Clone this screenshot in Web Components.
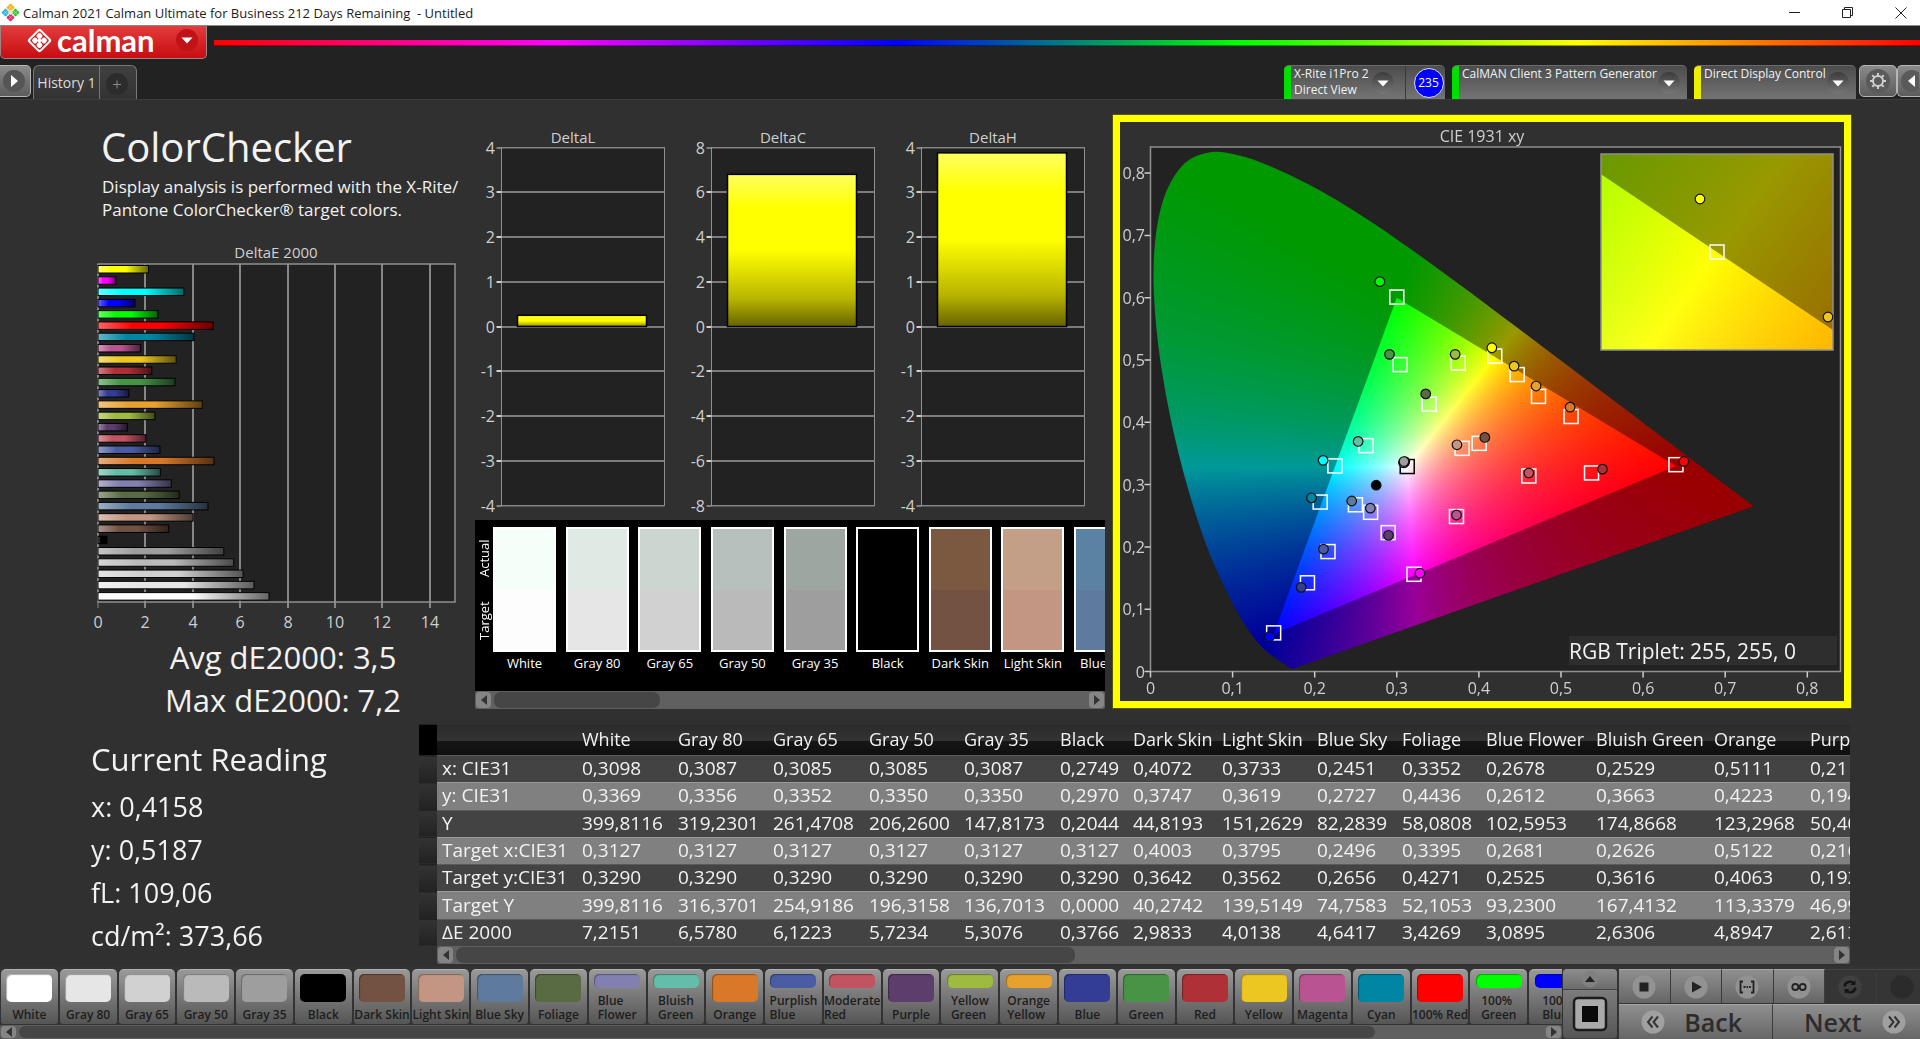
<!DOCTYPE html>
<html lang="en">
<head>
<meta charset="utf-8">
<title>Calman 2021 Calman Ultimate for Business 212 Days Remaining - Untitled</title>
<style>
html, body { margin: 0; height: 100%; background: #222; }
body { font-family: "Open Sans", "Noto Sans", sans-serif; color: #f2f2f2; overflow: hidden; }
</style>
</head>
<body>
<calman-app></calman-app>
<script>
const PATCHES = [
  // name, colour, target xy, actual xy, delta E
  { n: 'White', c: '#ffffff', t: [.3127, .3290], a: [.3098, .3369], e: 7.2151 },
  { n: 'Gray 80', c: '#e6e6e6', t: [.3127, .3290], a: [.3087, .3356], e: 6.5780 },
  { n: 'Gray 65', c: '#d1d1d1', t: [.3127, .3290], a: [.3085, .3352], e: 6.1223 },
  { n: 'Gray 50', c: '#bababa', t: [.3127, .3290], a: [.3085, .3350], e: 5.7234 },
  { n: 'Gray 35', c: '#9e9e9e', t: [.3127, .3290], a: [.3087, .3370], e: 5.3076 },
  { n: 'Black', c: '#000000', t: [.3127, .3290], a: [.2749, .2990], e: .3766 },
  { n: 'Dark Skin', c: '#735244', t: [.4003, .3662], a: [.4072, .3757], e: 2.9833 },
  { n: 'Light Skin', c: '#c29682', t: [.3795, .3582], a: [.3733, .3639], e: 4.0138 },
  { n: 'Blue Sky', c: '#5e7a9c', t: [.2496, .2676], a: [.2451, .2737], e: 4.6417 },
  { n: 'Foliage', c: '#596b42', t: [.3395, .4291], a: [.3352, .4456], e: 3.4269 },
  { n: 'Blue Flower', c: '#8280b0', t: [.2681, .2555], a: [.2678, .2622], e: 3.0895 },
  { n: 'Bluish Green', c: '#63bda8', t: [.2626, .3626], a: [.2529, .3693], e: 2.6306 },
  { n: 'Orange', c: '#d97829', t: [.5122, .4093], a: [.5111, .4243], e: 4.8947 },
  { n: 'Purplish Blue', c: '#4a5ca3', t: [.2162, .1925], a: [.2107, .1964], e: 2.6130 },
  { n: 'Moderate Red', c: '#c25461', t: [.4608, .3138], a: [.4608, .3187], e: 2.02 },
  { n: 'Purple', c: '#5c3d6b', t: [.2895, .2229], a: [.2899, .2186], e: 1.24 },
  { n: 'Yellow Green', c: '#9ebb40', t: [.3748, .4950], a: [.3711, .5091], e: 2.4 },
  { n: 'Orange Yellow', c: '#e6a12e', t: [.4726, .4416], a: [.4697, .4582], e: 4.4 },
  { n: 'Blue', c: '#333d96', t: [.1912, .1424], a: [.1835, .1351], e: 1.3 },
  { n: 'Green', c: '#479447', t: [.3041, .4926], a: [.2911, .5091], e: 3.25 },
  { n: 'Red', c: '#b03038', t: [.5372, .3187], a: [.5505, .3248], e: 2.27 },
  { n: 'Yellow', c: '#edc721', t: [.4466, .4766], a: [.4429, .4901], e: 3.3 },
  { n: 'Magenta', c: '#ba5491', t: [.3727, .2487], a: [.3727, .2512], e: 1.8 },
  { n: 'Cyan', c: '#0085a3', t: [.2067, .2720], a: [.1961, .2788], e: 4.05 },
  { n: '100% Red', c: '#ff0000', t: [.6400, .3320], a: [.6496, .3371], e: 4.86 },
  { n: '100% Green', c: '#00ff00', t: [.3000, .6010], a: [.2793, .6258], e: 2.53 },
  { n: '100% Blue', c: '#0000ff', t: [.1500, .0620], a: [.1449, .0559], e: 1.56 },
  { n: '100% Cyan', c: '#00ffff', t: [.2246, .3300], a: [.2103, .3389], e: 3.62 },
  { n: '100% Magenta', c: '#ff00ff', t: [.3209, .1560], a: [.3281, .1577], e: .75 },
  { n: '100% Yellow', c: '#ffff00', t: [.4193, .5063], a: [.4158, .5197], e: 2.13 }
];

function component(name, html, connected) {
  const tpl = document.createElement('template');
  tpl.innerHTML = '<style>*{box-sizing:border-box}button{font:inherit;color:inherit;margin:0;padding:0;border:0;background:none}svg{display:block}</style>' + html;
  customElements.define(name, class extends HTMLElement {
    connectedCallback() {
      if (this.shadowRoot) return;
      const root = this.attachShadow({ mode: 'open' });
      root.append(tpl.content.cloneNode(true));
      if (connected) connected(root, this);
    }
  });
}

component('title-bar', `
<style>
:host { display: flex; align-items: center; height: 26px; background: #fff; border-bottom: 1px solid #8a8a8a; color: #1c1c1c; font-size: 13px; padding-left: 1px; overflow: hidden; }
.name { flex: 1; white-space: pre; padding-left: 3px; }
.win { display: flex; margin-right: -7px; }
button { width: 53px; height: 25px; display: grid; place-items: center; }
</style>
<svg width="19" height="19" viewBox="-9.5 -9.5 19 19" aria-hidden="true">
  <g transform="rotate(45)">
    <rect x="-6.5" y="-6.5" width="6" height="6" rx="1" fill="#f7b512"/>
    <rect x=".5" y="-6.5" width="6" height="6" rx="1" fill="#35c52c"/>
    <rect x=".5" y=".5" width="6" height="6" rx="1" fill="#e6245f"/>
    <rect x="-6.5" y=".5" width="6" height="6" rx="1" fill="#2bb4e4"/>
    <rect x="-2" y="-2" width="4" height="4" fill="#e9e6c0"/>
    <path d="M-3.500-6.500v13M3.500-6.500v13M-6.500-3.500h13M-6.500 3.500h13" stroke="#fff" stroke-width=".7" opacity=".6"/>
  </g>
</svg>
<span class="name">Calman 2021 Calman Ultimate for Business 212 Days Remaining  - Untitled</span>
<div class="win">
<button aria-label="Minimize"><svg width="12" height="12"><path d="M0 5.500h11" stroke="#222"/></svg></button>
<button aria-label="Restore"><svg width="12" height="12" fill="none" stroke="#222"><path d="M.5 2.500h8v8h-8zM2.500 2.500v-2h8v8h-2"/></svg></button>
<button aria-label="Close"><svg width="12" height="12"><path d="M.5.5l11 11M11.500.5l-11 11" stroke="#222" fill="none"/></svg></button>
</div>`);

component('device-tab', `
<style>
:host { display: flex; height: 34px; border-radius: 5px 5px 0 0; overflow: hidden; background: linear-gradient(#4c4c4c, #747474); border-top: 1px solid #6c6c6c; font-size: 12px; line-height: 16px; }
.led { width: 7px; background: var(--led); }
.pick { flex: 1; display: flex; align-items: center; justify-content: space-between; text-align: left; padding: 0 var(--pad, 7px) 0 3px; white-space: pre; }
.text { align-self: start; }
</style>
<span class="led"></span>
<button class="pick"><span class="text"><slot></slot></span>
<svg width="22" height="22" viewBox="0 0 22 22"><defs><linearGradient id="g" x2="0" y2="1"><stop offset="0" stop-color="#3c3c3c"/><stop offset="1" stop-color="#777"/></linearGradient></defs><circle cx="11" cy="11" r="11" fill="url(#g)"/><path d="M5.500 8.500h11l-5.500 6z" fill="#fff"/></svg></button>
<slot name="extra"></slot>`);

component('level-badge', `
<style>
:host { display: grid; place-items: center; width: 40px; padding-left: 6px; border-left: 1px solid #3a3a3a; box-sizing: border-box; }
button { width: 30px; height: 30px; border-radius: 50%; background: #00f; border: 1px solid #dcdcff; font-size: 12px; color: #fff; }
</style><button><slot></slot></button>`);

component('app-header', `
<style>
:host { display: block; height: 73px; background: #222; }
.top { display: flex; height: 39px; align-items: start; gap: 7px; }
.brand { width: 207px; height: 33px; display: flex; align-items: center; padding: 0 8px 4px 25px; background: linear-gradient(#e23c3c, #c80d12); border: 1px solid #9d8484; border-top: 0; border-radius: 0 0 5px 5px; color: #fff; }
.word { flex: 1; text-align: left; padding-left: 4px; font: 700 31px/28px Lato, sans-serif; }
.rainbow { flex: 1; height: 6px; margin-top: 14px; background: linear-gradient(90deg, #f00, #f0f 20%, #00f 40%, #0f0 60%, #ff0 80%, #f00); border-bottom: 1px solid #0006; }
.bar { display: flex; align-items: start; height: 34px; }
.play, .sq { height: 32px; border: 1px solid #b5b5b5; border-radius: 0 5px 5px 0; background: linear-gradient(#8a8a8a, #5c5c5c); display: grid; place-items: center; }
.play { width: 31px; border-left: 0; margin-right: 2px; padding-right: 2px; }
.tabs { display: flex; height: 34px; border: 1px solid #777; border-bottom: 0; border-radius: 6px 6px 0 0; background: linear-gradient(#404040, #333); font-size: 14px; }
.tab { width: 65px; color: #ddd; white-space: nowrap; }
.add { width: 37px; border-left: 1px solid #777; display: grid; place-items: center; padding-right: 3px; }
.space { flex: 1; }
device-tab { margin-right: 7px; }
.d1 { width: 161px; --led: #00e000; --pad: 11px; }
.d2 { width: 235px; --led: #00e000; }
.d3 { width: 162px; --led: #f0ee00; margin-right: 3px; }
.sq { width: 38px; border-radius: 5px; }
.sq.end { width: 23px; border-right: 0; border-radius: 5px 0 0 5px; }
</style>
<div class="top">
  <button class="brand">
    <svg width="27" height="27" viewBox="-13.5 -13.5 27 27" aria-hidden="true"><g transform="rotate(45)" fill="#fff">
      <path fill-rule="evenodd" d="M-6-9H6A3 3 0 0 1 9-6V6A3 3 0 0 1 6 9H-6A3 3 0 0 1-9 6V-6A3 3 0 0 1-6-9zM-5.500-7A1.500 1.500 0 0 0-7-5.500V5.500A1.500 1.500 0 0 0-5.500 7H5.500A1.500 1.500 0 0 0 7 5.500V-5.500A1.500 1.500 0 0 0 5.500-7z"/>
      <rect x="-5.800" y="-5.800" width="5.200" height="5.200" rx="1.800"/><rect x=".6" y="-5.800" width="5.200" height="5.200" rx="1.800"/>
      <rect x="-5.800" y=".6" width="5.200" height="5.200" rx="1.800"/><rect x=".6" y=".6" width="5.200" height="5.200" rx="1.800"/>
      <circle r="2"/></g></svg>
    <span class="word">calman</span>
    <svg width="22" height="22"><circle cx="11" cy="11" r="11" fill="#c01217"/><path d="M5.500 8.500h11l-5.500 6z" fill="#fff"/></svg>
  </button>
  <div class="rainbow"></div>
</div>
<div class="bar">
  <button class="play" aria-label="Open"><svg width="22" height="22"><circle cx="11" cy="11" r="11" fill="#555"/><path d="M8 5l7 6-7 6z" fill="#fff"/></svg></button>
  <div class="tabs"><button class="tab">History 1</button><button class="add" aria-label="Add"><svg width="22" height="24"><circle cx="11" cy="13" r="11" fill="#2c2c2c"/><path d="M11 9.500v8M7 13.500h8" stroke="#8a8a8a"/></svg></button></div>
  <span class="space"></span>
  <device-tab class="d1">X-Rite i1Pro 2<br>Direct View<level-badge slot="extra">235</level-badge></device-tab>
  <device-tab class="d2">CalMAN Client 3 Pattern Generator</device-tab>
  <device-tab class="d3">Direct Display Control</device-tab>
  <button class="sq" aria-label="Settings"><svg width="24" height="24" viewBox="-12 -12 24 24"><circle r="12" fill="#5a5a5a"/><g fill="none" stroke="#d0d0d0" stroke-width="2"><circle r="5"/><path d="M0-8v2.500M0 8V5.500M-8 0h2.500M8 0H5.500M-5.700-5.700l1.800 1.800M5.700 5.700L3.900 3.900M-5.700 5.700l1.800-1.800M5.700-5.700L3.900-3.900"/></g></svg></button>
  <button class="sq end" aria-label="Expand"><svg width="20" height="22"><circle cx="13" cy="11" r="11" fill="#5a5a5a"/><path d="M16 5l-7 6 7 6z" fill="#fff"/></svg></button>
</div>`);

component('scroll-bar', `
<style>
:host { display: flex; height: 18px; background: #606060; padding: 1px; border-radius: 2px; }
button { width: 15px; background: #858585; border-radius: 4px; display: grid; place-items: center; }
.track { flex: 1; margin: 0 3px; }
.thumb { height: 100%; width: var(--thumb, 40%); background: #464646; border-radius: 7px; }
</style>
<button aria-label="Scroll left"><svg width="6" height="10"><path d="M6 0v10L0 5z" fill="#333"/></svg></button>
<div class="track"><div class="thumb"></div></div>
<button aria-label="Scroll right"><svg width="6" height="10"><path d="M0 0v10l6-5z" fill="#333"/></svg></button>`);

component('delta-e-chart', `
<style>:host { display: block; } svg { width: 100%; height: auto; overflow: visible; } text { fill: #cfcfcf; font-size: 16px; text-anchor: middle; } .name { font-size: 15px; }</style>
<svg viewBox="0 0 475 400" role="img" aria-label="DeltaE 2000"></svg>`, root => {
  const L = 98, T = 24, R = 455, B = 362, U = 23.7;
  let s = '<defs><linearGradient id="sh"><stop offset="0" stop-color="#fff" stop-opacity=".4"/><stop offset=".3" stop-color="#fff" stop-opacity="0"/><stop offset=".55" stop-color="#000" stop-opacity="0"/><stop offset="1" stop-color="#000" stop-opacity=".6"/></linearGradient></defs>';
  s += `<text class="name" x="276" y="18">DeltaE 2000</text><rect x="${L}" y="${T}" width="${R - L}" height="${B - T}" fill="#222"/>`;
  for (let v = 0; v <= 14; v += 2) {
    const x = Math.round(L + v * U);
    s += `<path d="M${x} ${T}V${B + 6}" stroke="#868686" stroke-width="${v ? 2 : 1}"/><text x="${x}" y="${B + 26}">${v}</text>`;
  }
  s += `<rect x="${L}" y="${T}" width="${R - L}" height="${B - T}" fill="none" stroke="#909090" stroke-width="1.500"/>`;
  [...PATCHES].reverse().forEach((p, i) => {
    const y = T + 1.500 + i * 11.28, w = p.e * U;
    s += `<rect x="${L}" y="${y}" width="${w}" height="7.500" fill="${p.c}"/><rect x="${L}" y="${y}" width="${w}" height="7.500" fill="url(#sh)" stroke="#000"/>`;
  });
  root.querySelector('svg').innerHTML = s;
});

component('delta-chart', `
<style>:host { display: block; } svg { width: 100%; height: auto; overflow: visible; } text { fill: #cfcfcf; font-size: 16px; } .name { font-size: 15px; }</style>
<svg viewBox="0 0 210 394" role="img"></svg>`, (root, el) => {
  const name = el.getAttribute('name'), max = +el.getAttribute('max'), value = +el.getAttribute('value');
  const L = 26.5, R = 189.5, T = 21.5, B = 379.5, step = (B - T) / 8;
  let s = '<defs><linearGradient id="y" x2="0" y2="1"><stop offset="0" stop-color="#ffff60"/><stop offset=".22" stop-color="#ff0"/><stop offset=".5" stop-color="#ff0"/><stop offset=".82" stop-color="#b8b400"/><stop offset="1" stop-color="#666200"/></linearGradient></defs>';
  s += `<text class="name" x="98" y="17" text-anchor="middle">${name}</text><rect x="${L}" y="${T}" width="${R - L}" height="${B - T}" fill="#222" stroke="#909090"/>`;
  for (let i = 0; i <= 8; i++) {
    const y = Math.round(T + i * step), edge = i % 8 === 0;
    s += `<path d="M${L} ${y}H${R}" stroke="#7c7c7c" stroke-width="${edge ? 1 : 2}"/><path d="M${L} ${y}h-5" stroke="#d0d0d0" stroke-width="${edge ? 1 : 2}"/><text x="20" y="${y + 6}" text-anchor="end">${max - i * max / 4}</text>`;
  }
  const h = value / max * 4 * step;
  s += `<rect x="42.500" y="${T + 4 * step - h}" width="129" height="${h}" fill="url(#y)" stroke="#000" stroke-width="1.500"/>`;
  root.querySelector('svg').innerHTML = s;
});

component('patch-strip', `
<style>
:host { display: block; }
.view { display: flex; height: 171px; background: #000; overflow: hidden; padding-top: 7px; color: #fff; }
.side { flex: none; width: 18px; height: 125px; display: flex; flex-direction: row; align-items: center; justify-content: space-around; writing-mode: vertical-rl; transform: rotate(180deg); font-size: 13px; line-height: 16px; }
.list { flex: none; width: 644px; display: grid; grid-template-columns: repeat(9, 63px); justify-content: space-between; }
.p { text-align: center; font-size: 13px; white-space: nowrap; }
.sw { height: 125px; border: 2px solid #fff; background: linear-gradient(var(--a) 50%, var(--t) 50%); margin-bottom: 2px; }
span { display: block; }
scroll-bar { --thumb: 28%; }
</style>
<div class="view"><div class="side"><span>Target</span><span>Actual</span></div><div class="list"></div></div>
<scroll-bar></scroll-bar>`, root => {
  const actual = ['#f5fff9', '#dfeae4', '#ccd5d0', '#b8c0bd', '#9ea6a1', '#000', '#7b5840', '#c29f86', '#5b82a2'];
  root.querySelector('.list').innerHTML = actual.map((a, i) =>
    `<div class="p"><div class="sw" style="--a:${a};--t:${i ? PATCHES[i].c : '#fdfdfd'}"></div><span>${PATCHES[i].n}</span></div>`).join('');
});

component('cie-chart', `
<style>
:host { display: grid; border: 7px solid #ff0; outline: 1px solid #55550a; background: #303030; }
canvas, svg { grid-area: 1 / 1; width: 100%; height: auto; display: block; }
text { fill: #cfcfcf; font-size: 16px; }
.rgb { fill: #f4f4f4; font-size: 21px; }
</style>
<canvas width="724" height="579"></canvas>
<svg viewBox="0 0 724 579" role="img" aria-label="CIE 1931 xy"></svg>`, root => {
  const LOCUS = [[.1741,.0050],[.1733,.0048],[.1714,.0051],[.1689,.0069],[.1644,.0109],[.1566,.0177],[.1510,.0227],[.1440,.0297],[.1355,.0399],[.1241,.0578],[.1096,.0868],[.0913,.1327],[.0687,.2007],[.0454,.2950],[.0235,.4127],[.0082,.5384],[.0039,.6548],[.0139,.7502],[.0389,.8120],[.0743,.8338],[.1142,.8262],[.1547,.8059],[.1929,.7816],[.2296,.7543],[.2658,.7243],[.3016,.6923],[.3373,.6589],[.3731,.6245],[.4087,.5896],[.4441,.5547],[.4788,.5202],[.5125,.4866],[.5448,.4544],[.5752,.4242],[.6029,.3965],[.6270,.3725],[.6658,.3340],[.6915,.3083],[.7190,.2809],[.7347,.2653]];
  const OX = 30.5, OY = 549.5, SX = 821, SY = 623, TOP = 25, RIGHT = 720.5;
  const ctx = root.querySelector('canvas').getContext('2d');

  // Chromaticity to relative RGB, scaled so that the largest channel is full.
  function colour(x, y) {
    y = Math.max(y, .001);
    const X = x / y, Z = (1 - x - y) / y;
    const c = [3.2406 * X - 1.5372 - .4986 * Z, -.9689 * X + 1.8758 + .0415 * Z, .0557 * X - .2040 + 1.0570 * Z].map(v => Math.max(0, v));
    const m = Math.max(...c) || 1;
    return c.map(v => v / m * 255);
  }
  // Draws one window of the diagram: dim inside the locus, bright inside the gamut triangle.
  function draw(px, py, w, h, toX, toY, fromX, fromY) {
    const layer = k => {
      const cv = document.createElement('canvas'); cv.width = w; cv.height = h;
      const g = cv.getContext('2d'), im = g.createImageData(w, h);
      for (let j = 0; j < h; j++) for (let i = 0; i < w; i++) {
        const c = colour(fromX(px + i + .5), fromY(py + j + .5)), o = (j * w + i) * 4;
        im.data[o] = c[0] * k; im.data[o + 1] = c[1] * k; im.data[o + 2] = c[2] * k; im.data[o + 3] = 255;
      }
      g.putImageData(im, 0, 0); return cv;
    };
    const P = LOCUS.map(([x, y]) => [toX(x), toY(y)]);
    ctx.save(); ctx.beginPath(); ctx.rect(px, py, w, h); ctx.clip();
    ctx.beginPath(); ctx.moveTo(...P[0]);
    for (let i = 0; i < P.length - 1; i++) {
      const a = P[Math.max(0, i - 1)], b = P[i], c = P[i + 1], d = P[Math.min(P.length - 1, i + 2)];
      ctx.bezierCurveTo(b[0] + (c[0] - a[0]) / 6, b[1] + (c[1] - a[1]) / 6, c[0] - (d[0] - b[0]) / 6, c[1] - (d[1] - b[1]) / 6, c[0], c[1]);
    }
    ctx.closePath(); ctx.clip(); ctx.drawImage(layer(.6), px, py);
    ctx.beginPath(); [[.64, .33], [.3, .6], [.15, .06]].forEach(([x, y]) => ctx.lineTo(toX(x), toY(y)));
    ctx.closePath(); ctx.clip(); ctx.drawImage(layer(1), px, py);
    ctx.restore();
  }
  ctx.fillStyle = '#222'; ctx.fillRect(OX, TOP, RIGHT - OX, OY - TOP);
  const X = x => OX + x * SX, Y = y => OY - y * SY;
  draw(30, TOP, 690, 525, X, Y, p => (p - OX) / SX, p => (OY - p) / SY);

  const ix = 481, iy = 32, iw = 232, ih = 196, zx = iw / .05, zy = ih / .05, cx = ix + iw / 2, cy = iy + ih / 2, tx = .4193, ty = .5053;
  draw(ix, iy, iw, ih, x => cx + (x - tx) * zx, y => cy - (y - ty) * zy, p => tx + (p - cx) / zx, p => ty - (p - cy) / zy);

  const sq = (x, y, c = '#fff') => `<rect x="${x - 7}" y="${y - 7}" width="14" height="14" fill="none" stroke="${c}" stroke-width="1.500"/>`;
  const dot = (x, y, c) => `<circle cx="${x}" cy="${y}" r="4.800" fill="${c}" stroke="#111" stroke-width="1.200"/>`;
  let s = `<text x="362" y="20" text-anchor="middle">CIE 1931 xy</text><rect x="${OX}" y="${TOP}" width="${RIGHT - OX}" height="${OY - TOP}" fill="none" stroke="#909090" stroke-width="1.500"/>`;
  for (let i = 0; i <= 8; i++) {
    const t = i ? '0,' + i : '0', x = X(i / 10), y = Y(i / 10);
    s += `<path d="M${x} ${OY}v6M${OX} ${y}h-6" stroke="#ccc" stroke-width="1.500"/><text x="${x}" y="572" text-anchor="middle">${t}</text><text x="25" y="${y + 6}" text-anchor="end">${t}</text>`;
  }
  PATCHES.forEach((p, i) => { if (i > 4) s += sq(X(p.t[0]), Y(p.t[1]), i < 6 ? '#000' : '#fff'); });
  PATCHES.forEach(p => { s += dot(X(p.a[0]), Y(p.a[1]), p.c); });
  s += `<rect x="${ix}" y="${iy}" width="${iw}" height="${ih}" fill="none" stroke="#909090" stroke-width="1.500"/>`;
  s += sq(cx, cy) + dot(580, 77, '#ff0') + dot(708, 195, '#edc721');
  s += '<rect x="449" y="514" width="268" height="29" fill="#2e2e2e"/><text class="rgb" x="449" y="537">RGB Triplet: 255, 255, 0</text>';
  root.querySelector('svg').innerHTML = s;
});

component('data-table', `
<style>
:host { display: block; min-width: 0; }
.clip { overflow: hidden; }
table { table-layout: fixed; border-collapse: collapse; width: 1580px; height: 222px; font-size: 19px; line-height: 24px; }
th, td { padding: 0 0 2px 5px; text-align: left; font-weight: 400; white-space: nowrap; }
thead tr { height: 31px; font-size: 18px; background: linear-gradient(#2b2b2b, #333 50%, #161616 50%, #0f0f0f); }
tbody tr { background: #434343; border-top: 1px solid #5a5a5a; }
tbody tr:nth-child(even) { background: #808080; border-top-color: #999; }
tr > :first-child { background: linear-gradient(#333, #222); border-top: 1px solid #222; }
thead tr > :first-child { background: #000; }
scroll-bar { margin-left: 18px; --thumb: 45%; }
</style>
<div class="clip"><table></table></div><scroll-bar></scroll-bar>`, root => {
  const widths = [18, 140, 96, 95, 96, 95, 96, 73, 89, 95, 85, 84, 110, 118, 96, 194];
  const head = ['', '', ...PATCHES.slice(0, 14).map(p => p.n)];
  const rows = `x: CIE31|0,3098|0,3087|0,3085|0,3085|0,3087|0,2749|0,4072|0,3733|0,2451|0,3352|0,2678|0,2529|0,5111|0,21
y: CIE31|0,3369|0,3356|0,3352|0,3350|0,3350|0,2970|0,3747|0,3619|0,2727|0,4436|0,2612|0,3663|0,4223|0,194
Y|399,8116|319,2301|261,4708|206,2600|147,8173|0,2044|44,8193|151,2629|82,2839|58,0808|102,5953|174,8668|123,2968|50,40
Target x:CIE31|0,3127|0,3127|0,3127|0,3127|0,3127|0,3127|0,4003|0,3795|0,2496|0,3395|0,2681|0,2626|0,5122|0,216
Target y:CIE31|0,3290|0,3290|0,3290|0,3290|0,3290|0,3290|0,3642|0,3562|0,2656|0,4271|0,2525|0,3616|0,4063|0,192
Target Y|399,8116|316,3701|254,9186|196,3158|136,7013|0,0000|40,2742|139,5149|74,7583|52,1053|93,2300|167,4132|113,3379|46,99
ΔE 2000|7,2151|6,5780|6,1223|5,7234|5,3076|0,3766|2,9833|4,0138|4,6417|3,4269|3,0895|2,6306|4,8947|2,613`.split('\n').map(r => r.split('|'));
  root.querySelector('table').innerHTML =
    '<colgroup>' + widths.map(w => `<col style="width:${w}px">`).join('') + '</colgroup>' +
    '<thead><tr>' + head.map(h => `<th>${h}</th>`).join('') + '</tr></thead><tbody>' +
    rows.map(r => '<tr><td></td>' + r.map((c, i) => i ? `<td>${c}</td>` : `<th>${c}</th>`).join('') + '</tr>').join('') + '</tbody>';
});

component('patch-button', `
<style>
:host { display: block; height: 55px; min-width: 0; }
button { width: 100%; height: 55px; display: flex; flex-direction: column; align-items: center; border-radius: 5px 5px 3px 3px; background: linear-gradient(#999, #555); border-top: 1px solid #b0b0b0; color: #1d1d1d; font-size: 12px; font-weight: 600; line-height: 14px; padding: 4px 0 2px; white-space: nowrap; }
i { width: 46px; flex: 1; border-radius: 5px; background: var(--c); box-shadow: inset 1px 1px 1px #0005; margin-bottom: 6px; }
span { text-align: left; }
</style>
<button><i></i><span><slot></slot></span></button>`);

component('patch-tray', `
<style>
:host { display: block; min-width: 0; overflow: hidden; }
.row { display: grid; grid-template-columns: repeat(27, minmax(0, 1fr)); column-gap: 2px; width: 1586px; padding: 3px 0 1px 1px; }
scroll-bar { height: 14px; --thumb: 89%; }
</style><div class="row"></div><scroll-bar></scroll-bar>`, root => {
  const two = n => ['Blue Flower', 'Bluish Green', 'Purplish Blue', 'Moderate Red', 'Yellow Green', 'Orange Yellow', '100% Green', '100% Blue'].includes(n) ? n.replace(' ', '<br>') : n;
  root.querySelector('.row').innerHTML = PATCHES.slice(0, 27).map(p => `<patch-button style="--c:${p.c}">${two(p.n)}</patch-button>`).join('');
});

component('transport-panel', `
<style>
:host { display: grid; grid-template-columns: 54px minmax(0, 1fr); column-gap: 2px; padding-top: 3px; color: #2c2c2c; overflow: hidden; }
.pick, .keys { display: grid; }
.pick { grid-template-rows: 21px 49px; }
.pick button { background: linear-gradient(#8d8d8d, #6c6c6c); border-bottom: 1px solid #444; border-radius: 4px 4px 0 0; display: grid; place-items: center; }
.pick button + button { background: linear-gradient(#7c7c7c, #565656); border-radius: 0 0 4px 4px; }
.keys { grid-template-rows: 34px 35px; row-gap: 1px; }
.media { display: grid; grid-template-columns: repeat(6, minmax(0, 1fr)); margin-right: -8px; }
.nav { display: grid; grid-template-columns: 154px minmax(0, 1fr); }
.keys button { background: linear-gradient(#8f8f8f, #666); border-right: 1px solid #3c3c3c; border-top: 1px solid #a5a5a5; }
.media button { display: grid; place-items: center; }
.media button:disabled { background: #353535; border-top-color: #444; }
.nav button { display: flex; align-items: center; justify-content: space-between; font-size: 25px; font-weight: 600; padding: 0 30px 0 22px; line-height: 30px; }
.nav button + button { padding: 0 14px 0 31px; border-right: 0; }
</style>
<div class="pick">
  <button aria-label="Up"><svg width="18" height="18"><circle cx="9" cy="9" r="8.500" fill="#808080"/><path d="M4 12h10l-5-6z" fill="#222"/></svg></button>
  <button aria-label="Pattern window"><svg width="36" height="36"><rect x="2" y="2" width="32" height="32" rx="4" fill="#aaa" stroke="#1c1c1c" stroke-width="2.500"/><rect x="10" y="10" width="16" height="16" fill="#0a0a0a"/></svg></button>
</div>
<div class="keys">
  <div class="media">
    <button aria-label="Stop"><svg width="24" height="24"><circle cx="12" cy="12" r="11.500" fill="#929292"/><rect x="7.500" y="7.500" width="9" height="9" fill="#222"/></svg></button>
    <button aria-label="Play"><svg width="24" height="24"><circle cx="12" cy="12" r="11.500" fill="#929292"/><path d="M8 6.500v11l10-5.500z" fill="#222"/></svg></button>
    <button aria-label="Series"><svg width="24" height="24" fill="none" stroke="#222" stroke-width="1.800"><circle cx="12" cy="12" r="11.500" fill="#929292" stroke="none"/><path d="M8 6.500H5.500v11H8M16 6.500h2.500v11H16M8.500 12h2M11.500 12h1.500M14 12h1.800"/></svg></button>
    <button aria-label="Continuous"><svg width="24" height="24" fill="none" stroke="#222" stroke-width="1.800"><circle cx="12" cy="12" r="11.500" fill="#929292" stroke="none"/><circle cx="8.300" cy="12" r="3"/><circle cx="15.700" cy="12" r="3"/></svg></button>
    <button disabled aria-label="Refresh"><svg width="24" height="24" fill="none" stroke="#151515" stroke-width="2.500"><circle cx="12" cy="12" r="11.500" fill="#404040" stroke="none"/><path d="M6.500 11.500a5.500 5.500 0 0 1 9.500-3M17.500 12.500a5.500 5.500 0 0 1-9.500 3"/><path d="M17.500 5v5h-5zM6.500 19v-5h5z" fill="#151515" stroke="none"/></svg></button>
    <button disabled aria-label="Unused"><svg width="24" height="24"><circle cx="12" cy="12" r="11.500" fill="#2b2b2b"/></svg></button>
  </div>
  <div class="nav">
    <button><svg width="24" height="24" fill="none" stroke="#333" stroke-width="2"><circle cx="12" cy="12" r="11.500" fill="#a0a0a0" stroke="none"/><path d="M11.500 6.500L7 12l4.500 5.500M17 6.500L12.500 12l4.500 5.500"/></svg>Back</button>
    <button>Next<svg width="24" height="24" fill="none" stroke="#333" stroke-width="2"><circle cx="12" cy="12" r="11.500" fill="#a0a0a0" stroke="none"/><path d="M12.500 6.500L17 12l-4.500 5.500M7 6.500l4.500 5.500L7 17.500"/></svg></button>
  </div>
</div>`);

component('calman-app', `
<style>
:host { display: flex; flex-direction: column; min-height: 100%; }
main { flex: 1; display: grid; grid-template-columns: minmax(0, 419fr) minmax(0, 56fr) minmax(0, 630fr) minmax(0, 815fr); grid-template-rows: 624px auto; background: #303030; border-top: 1px solid #3c3c3c; }
.intro { grid-area: 1 / 1 / 2 / 3; }
h1 { font-size: 40px; line-height: 50px; font-weight: 400; margin: 22px 0 0 101px; }
p { margin: 3px 0 19px 102px; font-size: 17px; line-height: 23px; white-space: nowrap; }
.sum { width: 372px; margin: -4px 0 0 97px; text-align: center; font-size: 31px; line-height: 43px; }
.mid { grid-area: 1 / 3; display: flex; flex-direction: column; padding-top: 26px; }
.trio { display: grid; grid-template-columns: repeat(3, minmax(0, 1fr)); }
cie-chart { grid-area: 1 / 4; margin: 15px 69px 0 8px; align-self: start; }
.reading { padding: 14px 0 0 91px; font-size: 27px; line-height: 43px; white-space: nowrap; }
h2 { font-size: 31px; line-height: 43px; font-weight: 400; margin: 0 0 4px; }
data-table { grid-area: 2 / 2 / 3 / 5; margin-right: 70px; }
footer { display: grid; grid-template-columns: minmax(0, 1562fr) minmax(0, 357fr); column-gap: 1px; height: 73px; background: #333; }
</style>
<title-bar></title-bar>
<app-header></app-header>
<main>
  <section class="intro">
    <h1>ColorChecker</h1>
    <p>Display analysis is performed with the X-Rite/<br>Pantone ColorChecker® target colors.</p>
    <delta-e-chart></delta-e-chart>
    <div class="sum">Avg dE2000: 3,5<br>Max dE2000: 7,2</div>
  </section>
  <section class="mid">
    <div class="trio">
      <delta-chart name="DeltaL" max="4" value="0.25"></delta-chart>
      <delta-chart name="DeltaC" max="8" value="6.8"></delta-chart>
      <delta-chart name="DeltaH" max="4" value="3.88"></delta-chart>
    </div>
    <patch-strip></patch-strip>
  </section>
  <cie-chart></cie-chart>
  <section class="reading">
    <h2>Current Reading</h2>
    <div>x: 0,4158</div><div>y: 0,5187</div><div>fL: 109,06</div><div>cd/m²: 373,66</div>
  </section>
  <data-table></data-table>
</main>
<footer><patch-tray></patch-tray><transport-panel></transport-panel></footer>`);
</script>
</body>
</html>
